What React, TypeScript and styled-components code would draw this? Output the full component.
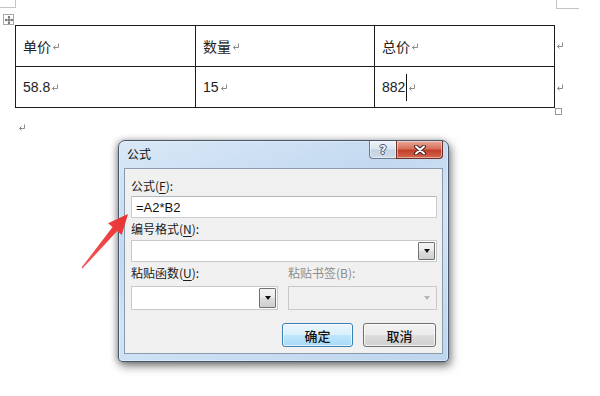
import React from "react";
import styled, { createGlobalStyle } from "styled-components";

const GlobalStyle = createGlobalStyle`
  html, body { margin: 0; padding: 0; background: #ffffff; }
  body { font-family: "Noto Sans CJK SC", "Noto Sans", sans-serif; }
`;

const Page = styled.div`
  position: relative;
  width: 600px;
  height: 396px;
  overflow: hidden;
  background: #ffffff;
`;

const Doc = styled.div`
  padding: 25px 0 0 15px;
  display: flex;
  flex-direction: column;
  align-items: flex-start;
`;

const Table = styled.table`
  border-collapse: collapse;
  width: 539px;
  table-layout: fixed;
`;

const Col = styled.col<{ $w: number }>`
  width: ${(p) => p.$w}px;
`;

const Cell = styled.td`
  box-sizing: border-box;
  height: 41px;
  border: 1px solid #1c1c1c;
  padding: 0 0 0 7px;
  font-family: "Liberation Sans", "Noto Sans CJK SC", sans-serif;
  font-size: 14px;
  color: #222;
  vertical-align: middle;
  white-space: nowrap;
  overflow: hidden;
`;

const CellText = styled.span`
  display: inline-flex;
  align-items: center;
  position: relative;
`;

const Cursor = styled.span`
  display: inline-block;
  width: 1px;
  height: 27px;
  background: #111;
  margin: 0 0 0 1px;
`;

const Mark = styled.svg`
  display: inline-block;
  width: 8px;
  height: 8px;
  margin-left: 1px;
  margin-top: 2px;
`;

const ReturnMark = () => (
  <Mark viewBox="0 0 8 8">
    <path d="M6.5 0.5 V4.5 H1.5 M3.5 2.5 L1.5 4.5 L3.5 6.5" fill="none" stroke="#8a8a8a" strokeWidth="1" />
  </Mark>
);

const AfterTable = styled.div`
  padding: 5px 0 0 2px;
  height: 10px;
`;

const Overlay = styled.div<{ $x: number; $y: number; $w: number; $h: number }>`
  position: absolute;
  left: ${(p) => p.$x}px;
  top: ${(p) => p.$y}px;
  width: ${(p) => p.$w}px;
  height: ${(p) => p.$h}px;
`;

const CropMark = styled(Overlay)<{ $side: "left" | "right" }>`
  border-bottom: 1px solid #c4c4c4;
  ${(p) => (p.$side === "left" ? "border-right: 1px solid #c4c4c4;" : "border-left: 1px solid #c4c4c4;")}
`;

const MoveHandle = styled(Overlay)`
  box-sizing: border-box;
  border: 1px solid #a8a8a8;
  background: #fff;
  display: flex;
  align-items: center;
  justify-content: center;
`;

const CornerBox = styled(Overlay)`
  box-sizing: border-box;
  border: 1px solid #9a9a9a;
  background: #fff;
`;

/* ---------- dialog ---------- */

const Window = styled.div`
  position: absolute;
  left: 118px;
  top: 140px;
  width: 331px;
  height: 222px;
  box-sizing: border-box;
  border: 1px solid #45566a;
  border-radius: 7px 7px 4px 4px;
  background: linear-gradient(160deg, #d9e8f7 0%, #c3d9f0 35%, #d2e4f6 55%, #bed5ee 100%);
  box-shadow: 0 0 0 1px rgba(255, 255, 255, 0.35) inset, 2px 4px 10px rgba(0, 0, 0, 0.5), -2px 0 6px rgba(0, 0, 0, 0.25);
  display: flex;
  flex-direction: column;
  padding: 0 5px 7px 5px;
  font-family: "Noto Sans CJK SC", "Noto Sans", sans-serif;
  font-size: 12px;
  color: #111;
`;

const TitleBar = styled.div`
  height: 27px;
  display: flex;
  justify-content: space-between;
  align-items: flex-start;
`;

const Title = styled.div`
  padding: 5px 0 0 3px;
  font-size: 12px;
  line-height: 16px;
  color: #111;
`;

const Caption = styled.div`
  display: flex;
`;

const CapButton = styled.div<{ $kind: "help" | "close" }>`
  box-sizing: border-box;
  height: 18px;
  width: ${(p) => (p.$kind === "help" ? 27 : 47)}px;
  border: 1px solid ${(p) => (p.$kind === "help" ? "#6d7e92" : "#6e2f28")};
  border-top: none;
  ${(p) => (p.$kind === "help" ? "border-right: none; border-radius: 0 0 0 4px;" : "border-radius: 0 0 4px 0;")}
  background: ${(p) =>
    p.$kind === "help"
      ? "linear-gradient(180deg, #eef3f8 0%, #dbe5ef 45%, #c4d3e3 55%, #cfdcea 100%)"
      : "linear-gradient(180deg, #e9a899 0%, #d8705c 45%, #c2402a 55%, #d5664f 100%)"};
  box-shadow: inset 0 0 0 1px rgba(255, 255, 255, 0.45);
  display: flex;
  align-items: center;
  justify-content: center;
`;

const HelpGlyph = styled.span`
  font-family: "DejaVu Sans", sans-serif;
  font-weight: bold;
  font-size: 12px;
  line-height: 12px;
  color: #eef2f6;
  text-shadow: 1px 0 0 #4a5666, -1px 0 0 #4a5666, 0 1px 0 #4a5666, 0 -1px 0 #4a5666;
`;

const Client = styled.div`
  flex: 1;
  box-sizing: border-box;
  background: #f0f0f0;
  border: 1px solid #8b9bae;
  padding: 9px 5px 0 6px;
  display: flex;
  flex-direction: column;
`;

const Label = styled.div<{ $disabled?: boolean; $mt?: number }>`
  height: 16px;
  line-height: 16px;
  font-size: 12px;
  margin-top: ${(p) => p.$mt ?? 0}px;
  color: ${(p) => (p.$disabled ? "#8d8d8d" : "#1a1a1a")};
  white-space: nowrap;
`;

const U = styled.span`
  text-decoration: underline;
  text-underline-offset: 2px;
`;

const TextBox = styled.div<{ $mt: number; $h: number }>`
  box-sizing: border-box;
  height: ${(p) => p.$h}px;
  margin-top: ${(p) => p.$mt}px;
  background: #fff;
  border: 1px solid #c9ccd1;
  border-top-color: #b3b6bb;
  padding: 0 4px;
  display: flex;
  align-items: center;
  font-family: "Liberation Sans", sans-serif;
  font-size: 13px;
  color: #111;
`;

const Combo = styled.div<{ $mt: number; $h: number; $disabled?: boolean }>`
  box-sizing: border-box;
  height: ${(p) => p.$h}px;
  margin-top: ${(p) => p.$mt}px;
  background: ${(p) => (p.$disabled ? "#f0f0f0" : "#fff")};
  border: 1px solid ${(p) => (p.$disabled ? "#c9c9c9" : "#c6c9ce")};
  display: flex;
  justify-content: flex-end;
  padding: 1px;
`;

const DropButton = styled.div<{ $disabled?: boolean }>`
  box-sizing: border-box;
  width: 17px;
  height: 100%;
  border: 1px solid ${(p) => (p.$disabled ? "transparent" : "#707070")};
  border-radius: 1px;
  background: ${(p) =>
    p.$disabled ? "transparent" : "linear-gradient(180deg, #f4f4f4 0%, #ebebeb 50%, #dddddd 51%, #cfcfcf 100%)"};
  display: flex;
  align-items: center;
  justify-content: center;
`;

const Triangle = styled.span<{ $disabled?: boolean }>`
  width: 0;
  height: 0;
  border-left: 3.5px solid transparent;
  border-right: 3.5px solid transparent;
  border-top: 4px solid ${(p) => (p.$disabled ? "#b5b5b5" : "#111")};
`;

const Row = styled.div<{ $mt?: number }>`
  display: grid;
  grid-template-columns: 147px 149px;
  column-gap: 10px;
  margin-top: ${(p) => p.$mt ?? 0}px;
`;

const Buttons = styled.div`
  display: flex;
  justify-content: flex-end;
  gap: 10px;
  margin-top: 13px;
  padding-right: 1px;
`;

const PushButton = styled.div<{ $default?: boolean; $w: number }>`
  box-sizing: border-box;
  width: ${(p) => p.$w}px;
  height: 24px;
  border-radius: 3px;
  border: 1px solid ${(p) => (p.$default ? "#3c7fb1" : "#707070")};
  background: ${(p) =>
    p.$default
      ? "linear-gradient(180deg, #eaf6fd 0%, #d9f0fc 50%, #bee6fd 51%, #a7d9f5 100%)"
      : "linear-gradient(180deg, #f2f2f2 0%, #ebebeb 50%, #dddddd 51%, #cfcfcf 100%)"};
  box-shadow: inset 0 0 0 1px rgba(255, 255, 255, 0.7);
  display: flex;
  align-items: center;
  justify-content: center;
  font-size: 13px;
  font-weight: 500;
  color: #111;
`;

const ArrowSvg = styled.svg`
  position: absolute;
  left: 0;
  top: 0;
  width: 600px;
  height: 396px;
  pointer-events: none;
`;

const Close = () => (
  <svg width="14" height="10" viewBox="0 0 14 10">
    <path d="M3 1.5 L11 8.5 M11 1.5 L3 8.5" stroke="#3e2420" strokeWidth="4" strokeLinecap="round" />
    <path d="M3 1.5 L11 8.5 M11 1.5 L3 8.5" stroke="#ffffff" strokeWidth="2" strokeLinecap="round" />
  </svg>
);

const MoveIcon = () => (
  <svg width="8" height="8" viewBox="0 0 8 8">
    <path d="M4 0 L4 8 M0 4 L8 4" stroke="#555" strokeWidth="1" />
    <path d="M4 0 L2.5 1.5 H5.5 Z M4 8 L2.5 6.5 H5.5 Z M0 4 L1.5 2.5 V5.5 Z M8 4 L6.5 2.5 V5.5 Z" fill="#555" />
  </svg>
);

const cells = [
  ["单价", "数量", "总价"],
  ["58.8", "15", "882"],
];

const colWidths = [180, 179, 180];

export default function App() {
  return (
    <Page>
      <GlobalStyle />
      <CropMark $side="left" $x={0} $y={0} $w={15} $h={7} />
      <CropMark $side="right" $x={556} $y={0} $w={22} $h={8} />
      <MoveHandle $x={3} $y={14} $w={11} $h={11}>
        <MoveIcon />
      </MoveHandle>
      <Doc>
        <Table>
          <colgroup>
            {colWidths.map((w, i) => (
              <Col key={i} $w={w} />
            ))}
          </colgroup>
          <tbody>
            {cells.map((row, r) => (
              <tr key={r}>
                {row.map((t, c) => (
                  <Cell key={c}>
                    <CellText>
                      {t}
                      {r === 1 && c === 2 ? <Cursor /> : null}
                      <ReturnMark />
                    </CellText>
                  </Cell>
                ))}
              </tr>
            ))}
          </tbody>
        </Table>
        <AfterTable>
          <ReturnMark />
        </AfterTable>
      </Doc>
      <Overlay $x={555} $y={31} $w={9} $h={9}>
        <ReturnMark />
      </Overlay>
      <Overlay $x={555} $y={73} $w={9} $h={9}>
        <ReturnMark />
      </Overlay>
      <CornerBox $x={555} $y={108} $w={7} $h={7} />

      <Window>
        <TitleBar>
          <Title>公式</Title>
          <Caption>
            <CapButton $kind="help">
              <HelpGlyph>?</HelpGlyph>
            </CapButton>
            <CapButton $kind="close">
              <Close />
            </CapButton>
          </Caption>
        </TitleBar>
        <Client>
          <Label>
            公式(<U>F</U>):
          </Label>
          <TextBox $mt={2} $h={22}>=A2*B2</TextBox>
          <Label $mt={3}>
            编号格式(<U>N</U>):
          </Label>
          <Combo $mt={3} $h={22}>
            <DropButton>
              <Triangle />
            </DropButton>
          </Combo>
          <Label $mt={3}>
            <Row>
              <span>
                粘贴函数(<U>U</U>):
              </span>
              <Label $disabled>粘贴书签(B):</Label>
            </Row>
          </Label>
          <Row $mt={5}>
            <Combo $mt={0} $h={24}>
              <DropButton>
                <Triangle />
              </DropButton>
            </Combo>
            <Combo $mt={0} $h={24} $disabled>
              <DropButton $disabled>
                <Triangle $disabled />
              </DropButton>
            </Combo>
          </Row>
          <Buttons>
            <PushButton $default $w={71}>
              确定
            </PushButton>
            <PushButton $w={73}>取消</PushButton>
          </Buttons>
        </Client>
      </Window>

      <ArrowSvg viewBox="0 0 600 396">
        <defs>
          <linearGradient id="ar" x1="0" y1="1" x2="1" y2="0">
            <stop offset="0" stopColor="#f25a5a" />
            <stop offset="1" stopColor="#e8302f" />
          </linearGradient>
        </defs>
        <polygon
          points="82.5,268.5 117.2,231.1 121.7,235 128,214 108.1,223.2 112.6,227.1 81.5,267.5"
          fill="url(#ar)"
        />
      </ArrowSvg>
    </Page>
  );
}
